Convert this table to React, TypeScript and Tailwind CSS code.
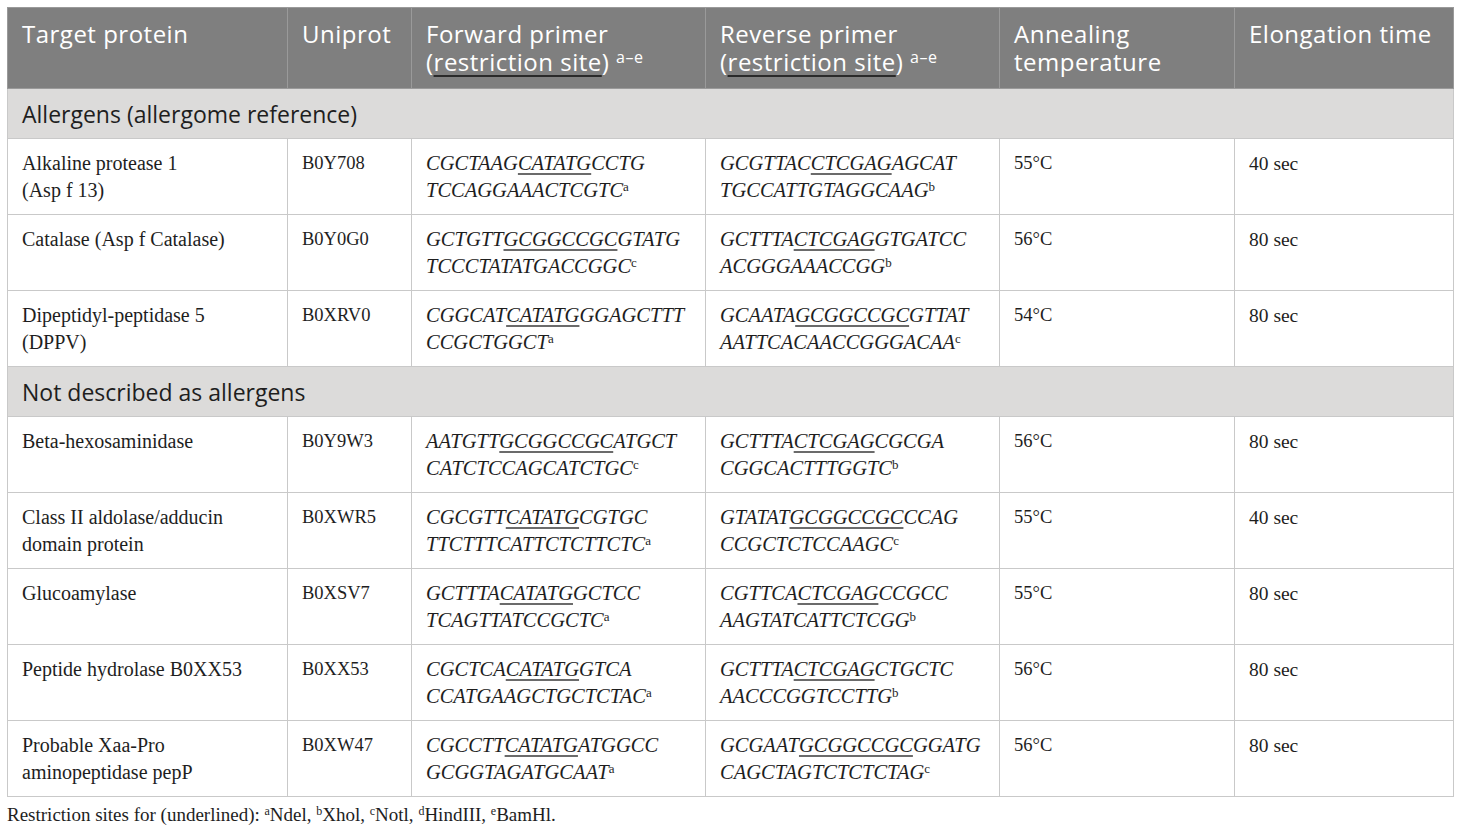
import React from "react";

type Seg = { t: string; u?: boolean };
type Primer = { l1: Seg[]; l2: string; sup: string };
type Row = {
  name: React.ReactNode;
  id: string;
  fw: Primer;
  rv: Primer;
  temp: string;
  time: string;
};

const p = (a: string, u: string, b: string, l2: string, sup: string): Primer => ({
  l1: [{ t: a }, { t: u, u: true }, { t: b }],
  l2,
  sup,
});

const group1: Row[] = [
  {
    name: (
      <>
        Alkaline protease 1<br />(Asp f 13)
      </>
    ),
    id: "B0Y708",
    fw: p("CGCTAAG", "CATATG", "CCTG", "TCCAGGAAACTCGTC", "a"),
    rv: p("GCGTTAC", "CTCGAG", "AGCAT", "TGCCATTGTAGGCAAG", "b"),
    temp: "55°C",
    time: "40 sec",
  },
  {
    name: <>Catalase (Asp f Catalase)</>,
    id: "B0Y0G0",
    fw: p("GCTGTT", "GCGGCCGC", "GTATG", "TCCCTATATGACCGGC", "c"),
    rv: p("GCTTTA", "CTCGAG", "GTGATCC", "ACGGGAAACCGG", "b"),
    temp: "56°C",
    time: "80 sec",
  },
  {
    name: (
      <>
        Dipeptidyl-peptidase 5<br />(DPPV)
      </>
    ),
    id: "B0XRV0",
    fw: p("CGGCAT", "CATATG", "GGAGCTTT", "CCGCTGGCT", "a"),
    rv: p("GCAATA", "GCGGCCGC", "GTTAT", "AATTCACAACCGGGACAA", "c"),
    temp: "54°C",
    time: "80 sec",
  },
];

const group2: Row[] = [
  {
    name: <>Beta-hexosaminidase</>,
    id: "B0Y9W3",
    fw: p("AATGTT", "GCGGCCGC", "ATGCT", "CATCTCCAGCATCTGC", "c"),
    rv: p("GCTTTA", "CTCGAG", "CGCGA", "CGGCACTTTGGTC", "b"),
    temp: "56°C",
    time: "80 sec",
  },
  {
    name: (
      <>
        Class II aldolase/adducin
        <br />
        domain protein
      </>
    ),
    id: "B0XWR5",
    fw: p("CGCGTT", "CATATG", "CGTGC", "TTCTTTCATTCTCTTCTC", "a"),
    rv: p("GTATAT", "GCGGCCGC", "CCAG", "CCGCTCTCCAAGC", "c"),
    temp: "55°C",
    time: "40 sec",
  },
  {
    name: <>Glucoamylase</>,
    id: "B0XSV7",
    fw: p("GCTTTA", "CATATG", "GCTCC", "TCAGTTATCCGCTC", "a"),
    rv: p("CGTTCA", "CTCGAG", "CCGCC", "AAGTATCATTCTCGG", "b"),
    temp: "55°C",
    time: "80 sec",
  },
  {
    name: <>Peptide hydrolase B0XX53</>,
    id: "B0XX53",
    fw: p("CGCTCA", "CATATG", "GTCA", "CCATGAAGCTGCTCTAC", "a"),
    rv: p("GCTTTA", "CTCGAG", "CTGCTC", "AACCCGGTCCTTG", "b"),
    temp: "56°C",
    time: "80 sec",
  },
  {
    name: (
      <>
        Probable Xaa-Pro
        <br />
        aminopeptidase pepP
      </>
    ),
    id: "B0XW47",
    fw: p("CGCCTT", "CATATG", "ATGGCC", "GCGGTAGATGCAAT", "a"),
    rv: p("GCGAAT", "GCGGCCGC", "GGATG", "CAGCTAGTCTCTCTAG", "c"),
    temp: "56°C",
    time: "80 sec",
  },
];

const serif = "font-['Liberation_Serif','Times_New_Roman',serif]";
const sans = "font-['Open_Sans','Noto_Sans',sans-serif]";

function PrimerCell({ pr }: { pr: Primer }) {
  return (
    <span className="italic">
      {pr.l1.map((s, i) =>
        s.u ? (
          <span key={i} className="underline decoration-[#6b6b6b] decoration-[1.5px] underline-offset-[3px]">
            {s.t}
          </span>
        ) : (
          <span key={i}>{s.t}</span>
        )
      )}
      <br />
      {pr.l2}
      <sup className="not-italic text-[13px] leading-none">{pr.sup}</sup>
    </span>
  );
}

const td =
  "border border-[#c9c9c9] align-top pl-[14px] pr-2 pt-[11px] pb-[10px] leading-[27px] text-[#1e1e1e]";

function DataRow({ r }: { r: Row }) {
  return (
    <tr className="h-[76px]">
      <td className={`${td} text-[20px]`}>{r.name}</td>
      <td className={`${td} text-[18.5px]`}>{r.id}</td>
      <td className={`${td} text-[20.5px]`}>
        <PrimerCell pr={r.fw} />
      </td>
      <td className={`${td} text-[20.5px]`}>
        <PrimerCell pr={r.rv} />
      </td>
      <td className={`${td} text-[18.5px]`}>{r.temp}</td>
      <td className={`${td} text-[19.5px]`}>{r.time}</td>
    </tr>
  );
}

function SectionRow({ title }: { title: string }) {
  return (
    <tr className="h-[50px]">
      <td
        colSpan={6}
        className={`${sans} border border-[#c9c9c9] bg-[#dcdbda] pl-[14px] align-middle text-[23px] leading-[28px] text-[#1e1e1e]`}
      >
        {title}
      </td>
    </tr>
  );
}

const th = `${sans} border border-[#9a9a9a] align-top text-left font-normal pl-[14px] pr-1 pt-[12px] pb-[12px] text-[24px] tracking-[0.5px] leading-[28px] text-white`;

export default function App() {
  return (
    <div className={`w-[1460px] h-[832px] bg-white pt-[7px] pl-[7px] ${serif}`}>
      <table className="border-collapse table-fixed w-[1446px] border border-[#b9b9b9]">
        <colgroup>
          <col className="w-[280px]" />
          <col className="w-[124px]" />
          <col className="w-[294px]" />
          <col className="w-[294px]" />
          <col className="w-[235px]" />
          <col className="w-[219px]" />
        </colgroup>
        <thead>
          <tr className="h-[81px] bg-[#7f7f7f]">
            <th className={th}>Target protein</th>
            <th className={th}>Uniprot</th>
            <th className={th}>
              Forward primer
              <br />
              (<span className="underline decoration-[#2a2a2a] decoration-[1.5px] underline-offset-[4px]">restriction site</span>){" "}
              <sup className="text-[16px] leading-none">a–e</sup>
            </th>
            <th className={th}>
              Reverse primer
              <br />
              (<span className="underline decoration-[#2a2a2a] decoration-[1.5px] underline-offset-[4px]">restriction site</span>){" "}
              <sup className="text-[16px] leading-none">a–e</sup>
            </th>
            <th className={th}>
              Annealing
              <br />
              temperature
            </th>
            <th className={th}>Elongation time</th>
          </tr>
        </thead>
        <tbody>
          <SectionRow title="Allergens (allergome reference)" />
          {group1.map((r) => (
            <DataRow key={r.id} r={r} />
          ))}
          <SectionRow title="Not described as allergens" />
          {group2.map((r) => (
            <DataRow key={r.id} r={r} />
          ))}
        </tbody>
      </table>
      <p className="mt-[7px] text-[19px] leading-[22px] text-[#1e1e1e]">
        Restriction sites for (underlined): <sup className="text-[12px]">a</sup>Ndel,{" "}
        <sup className="text-[12px]">b</sup>Xhol, <sup className="text-[12px]">c</sup>Notl,{" "}
        <sup className="text-[12px]">d</sup>HindIII, <sup className="text-[12px]">e</sup>BamHl.
      </p>
    </div>
  );
}
